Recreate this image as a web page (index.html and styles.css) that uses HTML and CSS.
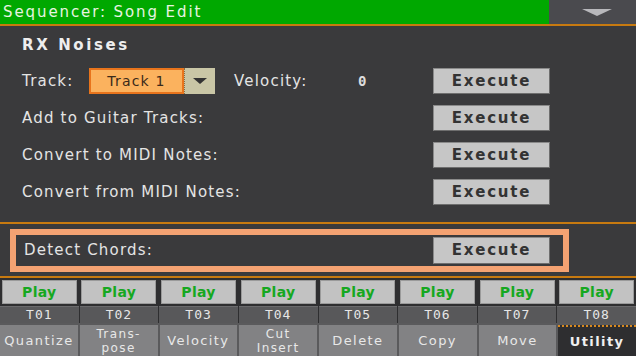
FILE: index.html
```html
<html>
    <head>
        <title>Sequencer: Song Edit</title>
        <link rel="stylesheet" href="styles.css">
    </head>
    <body>
        <div class = 'screen'>
            <div class = 'topbar'>
                <div class = 'title'>Sequencer: Song Edit</div>
                <div class = 'menu'><span class = 'menu-arrow'></span></div>
            </div>
            <div class = 'page'>
                <div class = 'section-title'>RX Noises</div>
                <div class = 'row'>
                    <span class = 'label track-label'>Track:</span>
                    <div class = 'combo'>
                        <span class = 'combo-value'>Track 1</span>
                        <span class = 'combo-arrow'><span class = 'tri-dark'></span></span>
                    </div>
                    <span class = 'label velocity'>Velocity:</span>
                    <span class = 'num'>0</span>
                    <button class = 'exec'>Execute</button>
                </div>
                <div class = 'row'>
                    <span class = 'label'>Add to Guitar Tracks:</span>
                    <button class = 'exec'>Execute</button>
                </div>
                <div class = 'row'>
                    <span class = 'label'>Convert to MIDI Notes:</span>
                    <button class = 'exec'>Execute</button>
                </div>
                <div class = 'row'>
                    <span class = 'label'>Convert from MIDI Notes:</span>
                    <button class = 'exec'>Execute</button>
                </div>
            </div>
            <div class = 'detect'>
                <div class = 'detect-box'>
                    <span class = 'label'>Detect Chords:</span>
                    <button class = 'exec'>Execute</button>
                </div>
            </div>
            <div class = 'tracks'>
                <div class = 'track'><button class = 'play'>Play</button><div class = 'tname'>T01</div></div>
                <div class = 'track'><button class = 'play'>Play</button><div class = 'tname'>T02</div></div>
                <div class = 'track'><button class = 'play'>Play</button><div class = 'tname'>T03</div></div>
                <div class = 'track'><button class = 'play'>Play</button><div class = 'tname'>T04</div></div>
                <div class = 'track'><button class = 'play'>Play</button><div class = 'tname'>T05</div></div>
                <div class = 'track'><button class = 'play'>Play</button><div class = 'tname'>T06</div></div>
                <div class = 'track'><button class = 'play'>Play</button><div class = 'tname'>T07</div></div>
                <div class = 'track'><button class = 'play'>Play</button><div class = 'tname'>T08</div></div>
            </div>
            <div class = 'tabs'>
                <div class = 'tab'>Quantize</div>
                <div class = 'tab two'>Trans-<br>pose</div>
                <div class = 'tab'>Velocity</div>
                <div class = 'tab two'>Cut<br>Insert</div>
                <div class = 'tab'>Delete</div>
                <div class = 'tab'>Copy</div>
                <div class = 'tab'>Move</div>
                <div class = 'tab active'>Utility</div>
            </div>
        </div>
    </body>
</html>
```

FILE: styles.css
```css
body {
    margin : 0;
    background : #fff;
    font-family: "DejaVu Sans", sans-serif;
}
.screen {
    width : 636px;
    height : 356px;
    background : #3a3a3c;
    display : flex;
    flex-direction : column;
    overflow : hidden;
}
.topbar {
    height : 24px;
    display : flex;
    border-bottom : 2px solid #c77a10;
}
.title {
    flex : 1;
    background : #00a800;
    color : #e8f4e0;
    font-size : 15px;
    letter-spacing : 1.9px;
    line-height : 24px;
    padding-left : 3px;
}
.menu {
    width : 87px;
    background : #4a4a4e;
    display : flex;
    justify-content : center;
    align-items : center;
}
.menu-arrow {
    width : 0;
    height : 0;
    border-left : 15px solid transparent;
    border-right : 15px solid transparent;
    border-top : 7px solid #b8b8bc;
    margin-left : 8px;
}
.page {
    padding : 0 0 12px 22px;
    border-bottom : 2px solid #c77a10;
}
.section-title {
    height : 36px;
    line-height : 38px;
    color : #eee;
    font-weight : bold;
    font-size : 15px;
    letter-spacing : 2.6px;
}
.row {
    height : 37px;
    display : flex;
    align-items : center;
}
.label {
    color : #e4e4e4;
    font-size : 15px;
    letter-spacing : 1.2px;
    flex : 1;
}
.track-label {
    flex : none;
    width : 67px;
}
.combo {
    display : flex;
    height : 26px;
    margin-right : 19px;
}
.combo-value {
    width : 91px;
    background : #fbb25e;
    border : 2px solid #e8741c;
    color : #3a2a1a;
    font-size : 14px;
    letter-spacing : 1.2px;
    text-align : center;
    line-height : 22px;
}
.combo-arrow {
    width : 30px;
    background : #c9c6a6;
    border-left : 1px dotted #8a6a40;
    display : flex;
    justify-content : center;
    align-items : center;
}
.tri-dark {
    width : 0;
    height : 0;
    border-left : 7px solid transparent;
    border-right : 7px solid transparent;
    border-top : 6px solid #333;
}
.velocity {
    flex : none;
    width : 124px;
}
.num {
    font-family: "DejaVu Sans Mono", monospace;
    font-weight : bold;
    color : #ddd;
    font-size : 14px;
    flex : 1;
}
.exec {
    width : 117px;
    height : 26px;
    margin : 0 86px 0 0;
    background : #c6c6c6;
    border : 1px solid #8a8a8a;
    border-right-color : #6e6e6e;
    border-bottom-color : #6e6e6e;
    color : #333;
    font-family: "DejaVu Sans", sans-serif;
    font-weight : bold;
    font-size : 15px;
    letter-spacing : 1.8px;
    padding : 0;
}
.detect {
    height : 52px;
    display : flex;
    align-items : center;
    padding-left : 10px;
    border-bottom : 2px solid #c77a10;
}
.detect-box {
    width : 539px;
    height : 31px;
    border : 6px solid #f4a272;
    display : flex;
    align-items : center;
    padding-left : 8px;
}
.detect-box .exec {
    height : 27px;
    margin-right : 13px;
}
.tracks {
    display : grid;
    grid-template-columns : repeat(8, 1fr);
    background : #2e2e30;
    column-gap : 1px;
    padding-top : 2px;
}
.track {
    display : flex;
    flex-direction : column;
    align-items : center;
}
.play {
    width : 75px;
    height : 24px;
    margin : 0 0 2px;
    background : #c2c2c2;
    border : 1px solid #9a9a9a;
    color : #16a820;
    font-family: "DejaVu Sans", sans-serif;
    font-weight : bold;
    font-size : 14px;
    letter-spacing : 0.3px;
    padding : 0;
}
.tname {
    align-self : stretch;
    height : 16px;
    background : #58585a;
    border-top : 1px solid #6a6a6c;
    color : #e6e6e6;
    font-family: "DejaVu Sans Mono", monospace;
    font-size : 13px;
    line-height : 16px;
    text-align : center;
    letter-spacing : 1px;
}
.tabs {
    flex : 1;
    display : grid;
    grid-template-columns : repeat(8, 1fr);
    column-gap : 2px;
    background : #5a5a5c;
    padding-top : 2px;
}
.tab {
    background : #828284;
    color : #e8e8e8;
    font-size : 13px;
    letter-spacing : 1.4px;
    display : flex;
    align-items : center;
    justify-content : center;
    text-align : center;
}
.two {
    line-height : 14px;
    font-size : 12px;
}
.active {
    background : #2e2e30;
    border-top : 2px dotted #d98a20;
    font-weight : bold;
    color : #f0f0f0;
}
```
